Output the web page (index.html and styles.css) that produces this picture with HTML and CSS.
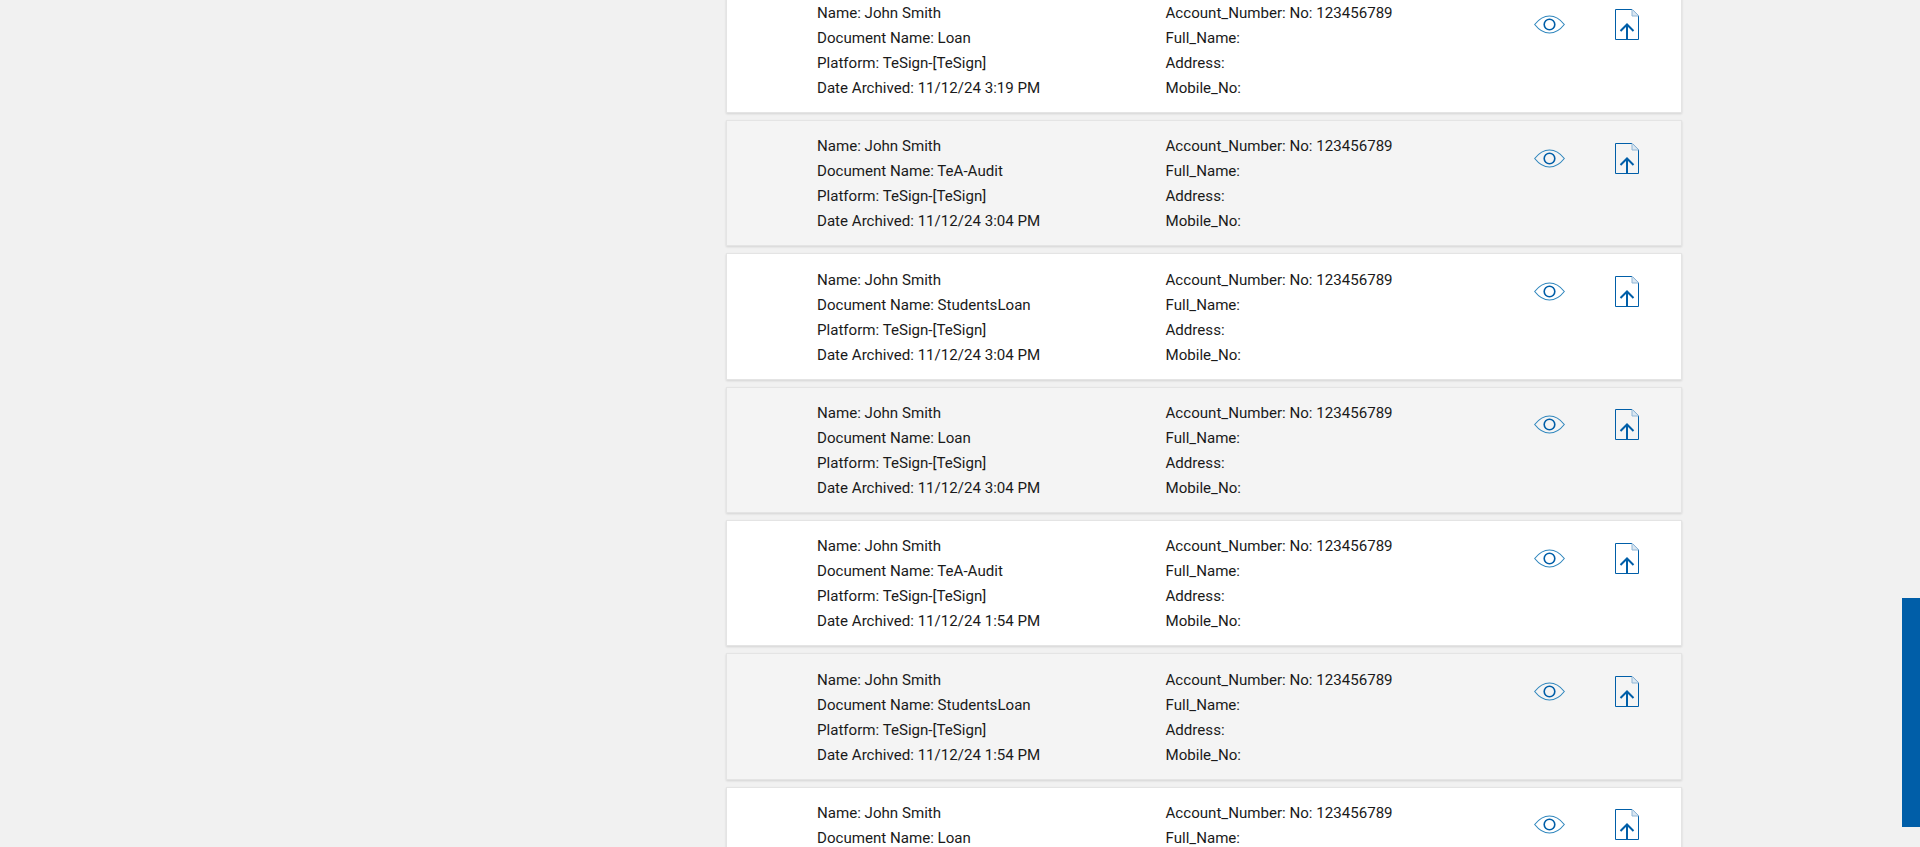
FILE: index.html
```html
<!DOCTYPE html>
<html lang="en">
<head>
    <meta charset="UTF-8">
    <title>Archived Documents</title>
    <link rel="stylesheet" href="styles.css">
</head>
<body>
    <svg class="icon-defs" width="0" height="0" aria-hidden="true">
        <symbol id="icon-eye" viewBox="0 0 31 19">
            <path d="M.7 9.500C5 4 10 1 15.500 1S26 4 30.300 9.500C26 15 21 18 15.500 18S5 15 .7 9.500Z" fill="none" stroke="#2f86bd" stroke-width="1.100"/>
            <circle cx="15.500" cy="9.500" r="5.300" fill="none" stroke="#005ea8" stroke-width="1.600"/>
        </symbol>
        <symbol id="icon-upload" viewBox="0 0 24 31">
            <path d="M.5.500H17L23.500 7V30.500H.5Z" fill="none" stroke="#005ea8" stroke-width="1"/>
            <path d="M17 .5V7H23.500" fill="#dbe7f2" stroke="#8fb6d6" stroke-width="1"/>
            <path d="M12 30V15.500M5.500 22L12 15.500L18.500 22" fill="none" stroke="#005ea8" stroke-width="2"/>
        </symbol>
    </svg>

    <main class="results">
        <div class="card">
            <div class="col-left">
                <div>Name: John Smith</div>
                <div>Document Name: Loan</div>
                <div>Platform: TeSign-[TeSign]</div>
                <div>Date Archived: 11/12/24 3:19 PM</div>
            </div>
            <div class="col-right">
                <div>Account_Number: No: 123456789</div>
                <div>Full_Name:</div>
                <div>Address:</div>
                <div>Mobile_No:</div>
            </div>
            <div class="actions">
                <svg class="eye"><use href="#icon-eye"/></svg>
                <svg class="upload"><use href="#icon-upload"/></svg>
            </div>
        </div>
        <div class="card alt">
            <div class="col-left">
                <div>Name: John Smith</div>
                <div>Document Name: TeA-Audit</div>
                <div>Platform: TeSign-[TeSign]</div>
                <div>Date Archived: 11/12/24 3:04 PM</div>
            </div>
            <div class="col-right">
                <div>Account_Number: No: 123456789</div>
                <div>Full_Name:</div>
                <div>Address:</div>
                <div>Mobile_No:</div>
            </div>
            <div class="actions">
                <svg class="eye"><use href="#icon-eye"/></svg>
                <svg class="upload"><use href="#icon-upload"/></svg>
            </div>
        </div>
        <div class="card">
            <div class="col-left">
                <div>Name: John Smith</div>
                <div>Document Name: StudentsLoan</div>
                <div>Platform: TeSign-[TeSign]</div>
                <div>Date Archived: 11/12/24 3:04 PM</div>
            </div>
            <div class="col-right">
                <div>Account_Number: No: 123456789</div>
                <div>Full_Name:</div>
                <div>Address:</div>
                <div>Mobile_No:</div>
            </div>
            <div class="actions">
                <svg class="eye"><use href="#icon-eye"/></svg>
                <svg class="upload"><use href="#icon-upload"/></svg>
            </div>
        </div>
        <div class="card alt">
            <div class="col-left">
                <div>Name: John Smith</div>
                <div>Document Name: Loan</div>
                <div>Platform: TeSign-[TeSign]</div>
                <div>Date Archived: 11/12/24 3:04 PM</div>
            </div>
            <div class="col-right">
                <div>Account_Number: No: 123456789</div>
                <div>Full_Name:</div>
                <div>Address:</div>
                <div>Mobile_No:</div>
            </div>
            <div class="actions">
                <svg class="eye"><use href="#icon-eye"/></svg>
                <svg class="upload"><use href="#icon-upload"/></svg>
            </div>
        </div>
        <div class="card">
            <div class="col-left">
                <div>Name: John Smith</div>
                <div>Document Name: TeA-Audit</div>
                <div>Platform: TeSign-[TeSign]</div>
                <div>Date Archived: 11/12/24 1:54 PM</div>
            </div>
            <div class="col-right">
                <div>Account_Number: No: 123456789</div>
                <div>Full_Name:</div>
                <div>Address:</div>
                <div>Mobile_No:</div>
            </div>
            <div class="actions">
                <svg class="eye"><use href="#icon-eye"/></svg>
                <svg class="upload"><use href="#icon-upload"/></svg>
            </div>
        </div>
        <div class="card alt">
            <div class="col-left">
                <div>Name: John Smith</div>
                <div>Document Name: StudentsLoan</div>
                <div>Platform: TeSign-[TeSign]</div>
                <div>Date Archived: 11/12/24 1:54 PM</div>
            </div>
            <div class="col-right">
                <div>Account_Number: No: 123456789</div>
                <div>Full_Name:</div>
                <div>Address:</div>
                <div>Mobile_No:</div>
            </div>
            <div class="actions">
                <svg class="eye"><use href="#icon-eye"/></svg>
                <svg class="upload"><use href="#icon-upload"/></svg>
            </div>
        </div>
        <div class="card">
            <div class="col-left">
                <div>Name: John Smith</div>
                <div>Document Name: Loan</div>
                <div>Platform: TeSign-[TeSign]</div>
                <div>Date Archived: 11/12/24 1:54 PM</div>
            </div>
            <div class="col-right">
                <div>Account_Number: No: 123456789</div>
                <div>Full_Name:</div>
                <div>Address:</div>
                <div>Mobile_No:</div>
            </div>
            <div class="actions">
                <svg class="eye"><use href="#icon-eye"/></svg>
                <svg class="upload"><use href="#icon-upload"/></svg>
            </div>
        </div>
    </main>

    <div class="side-tab"></div>
</body>
</html>
```

FILE: styles.css
```css
html, body {
    height: 100%;
}

body {
    margin: 0;
    background-color: #f1f1f1;
    color: #1a1a1a;
    font-family: Roboto, "Liberation Sans", sans-serif;
    font-size: 15.1px;
    line-height: 25px;
    overflow: hidden;
}

.icon-defs {
    display: block;
}

.results {
    width: 956px;
    margin: -13.3px 0 0 726px;
    display: flex;
    flex-direction: column;
    gap: 7px;
}

.card {
    flex: none;
    box-sizing: border-box;
    height: 126.32px;
    padding: 13.46px 0 0 90px;
    display: flex;
    background-color: #fff;
    border: 1px solid #e4e4e4;
    box-shadow: 0 1px 2px rgba(0, 0, 0, 0.12);
}

.card.alt {
    background-color: #f4f4f4;
}

.col-left {
    width: 348.5px;
}

.col-right {
    width: 368.5px;
}

.actions {
    display: flex;
    align-items: flex-start;
    padding-top: 8.34px;
}

.eye {
    width: 31px;
    height: 19px;
    margin-top: 6px;
}

.upload {
    width: 24px;
    height: 31px;
    margin-left: 50px;
}

.side-tab {
    position: fixed;
    right: 0;
    bottom: 20px;
    width: 18px;
    height: 229px;
    background-color: #005ea8;
}
```
